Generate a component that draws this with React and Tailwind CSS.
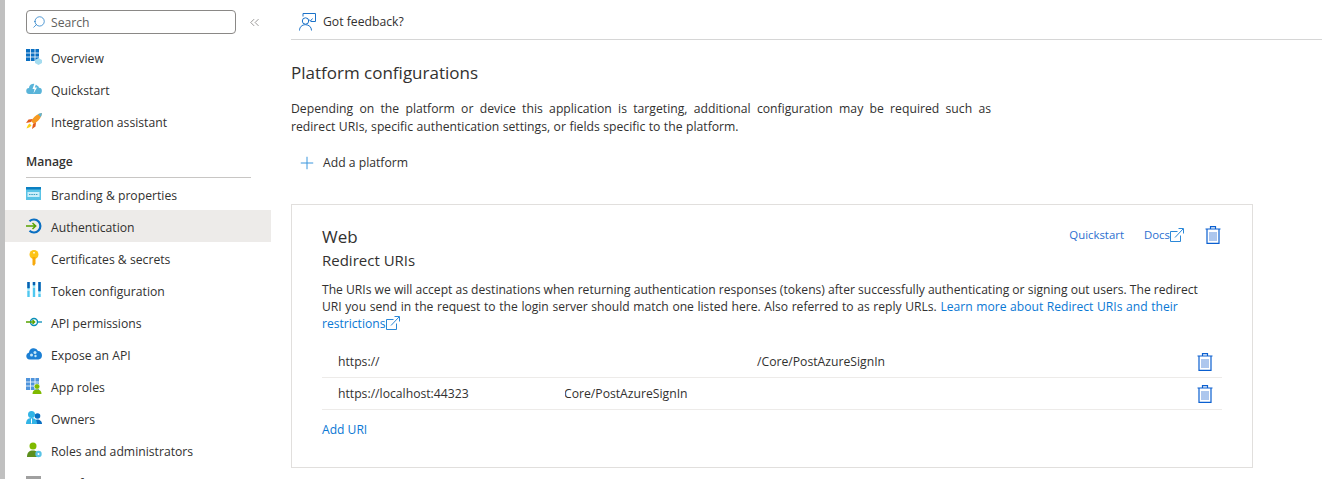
import { Search, ChevronsLeft, Plus } from "lucide-react";

const IconOverview = () => (
  <svg width="16" height="16" viewBox="0 0 16 16">
    <rect x="0" y="0" width="13" height="12" fill="#0a6fc2" />
    <path d="M4.500 0v12M9 0v12M0 4h13M0 8h13" stroke="#fff" strokeWidth=".8" />
    <path d="M9 11l3.500-2 3.500 2v3l-3.500 2L9 14z" fill="#a5dcef" />
  </svg>
);
const IconQuickstart = () => (
  <svg width="16" height="16" viewBox="0 0 16 16">
    <path d="M3.500 13a3 3 0 0 1-.5-6A4.500 4.500 0 0 1 11 4.500a3 3 0 0 1 2 2.300 3.100 3.100 0 0 1-.5 6.200z" fill="#59b4d9" />
    <path d="M8.500 2.500L6.500 8h2l-1 4.500 3.500-6H8.800l1.400-4z" fill="#fff" />
  </svg>
);
const IconRocket = () => (
  <svg width="16" height="16" viewBox="0 0 16 16">
    <path d="M16 0c-4 .5-7 2.500-9.500 6L5 8l3 3 2-1.500C13.500 7 15.500 4 16 0z" fill="#f59a23" />
    <path d="M16 0c-1.500.2-3 .7-4 1.300l2.700 2.700C15.300 3 15.800 1.500 16 0z" fill="#59b4d9" />
    <path d="M6.500 6L2.500 6.500 0 10l5-1zM10 9.500L9.500 13.500 6 16l1-5z" fill="#e25b1e" />
    <path d="M3.500 10.500C2 11.500 1 14 .500 15.500 2 15 4.500 14 5.500 12.500z" fill="#fcd116" />
  </svg>
);
const IconBranding = () => (
  <svg width="16" height="14" viewBox="0 0 16 14">
    <rect width="15" height="13" fill="#59c3e6" />
    <rect width="15" height="2.500" fill="#0a7fc2" />
    <rect x="1.500" y="5" width="12" height="5" fill="#c9eef9" />
    <path d="M3 7.500h9" stroke="#3a9fc4" strokeWidth="1.200" strokeDasharray="1.500 .8" />
  </svg>
);
const IconAuth = () => (
  <svg width="16" height="16" viewBox="0 0 16 16">
    <path d="M3.500 3.200A6.500 6.500 0 1 1 3.500 12.800" fill="none" stroke="#0a6fc2" strokeWidth="2.200" />
    <path d="M0 8h9.500M6.500 5l3.200 3-3.200 3" fill="none" stroke="#57a300" strokeWidth="1.500" />
  </svg>
);
const IconKey = () => (
  <svg width="16" height="16" viewBox="0 0 16 16">
    <circle cx="8" cy="4.500" r="4.500" fill="#fcc419" />
    <path d="M6.500 7h3v6.500L8 16l-1.500-1.500z" fill="#f7a90c" />
    <rect x="7" y="2" width="2" height="1.500" fill="#fff3c4" />
  </svg>
);
const IconToken = () => (
  <svg width="16" height="16" viewBox="0 0 16 16">
    <path d="M2.500 0v15M8 0v15M13.500 0v15" stroke="#50c8f0" strokeWidth="2.400" />
    <path d="M2.500 0v6M8 0v3M13.500 0v9" stroke="#0a5fb0" strokeWidth="2.400" />
    <path d="M1 8h3M6.500 5h3M12 11h3" stroke="#fff" strokeWidth="1" />
  </svg>
);
const IconApi = () => (
  <svg width="16" height="16" viewBox="0 0 16 16">
    <circle cx="8" cy="8" r="3.500" fill="none" stroke="#0a8fb8" strokeWidth="1.400" />
    <path d="M0 8h9M6.500 6l2.200 2-2.200 2" fill="none" stroke="#57a300" strokeWidth="1.300" />
    <path d="M11.500 8H16" stroke="#0a8fb8" strokeWidth="1.300" />
  </svg>
);
const IconExpose = () => (
  <svg width="16" height="16" viewBox="0 0 16 16">
    <path d="M3.500 13.500a3.500 3.500 0 0 1-.5-6.900A4.700 4.700 0 0 1 12 5a4.300 4.300 0 0 1 .5 8.500z" fill="#1b7fd4" />
    <circle cx="5.500" cy="9" r="1.500" fill="#c4e6f7" />
    <circle cx="9" cy="6.500" r="1.500" fill="#c4e6f7" />
    <circle cx="9.500" cy="10" r="1.200" fill="#c4e6f7" />
  </svg>
);
const IconAppRoles = () => (
  <svg width="16" height="16" viewBox="0 0 16 16">
    <rect width="13" height="12" fill="#4f94dc" />
    <path d="M4.500 0v12M9 0v12M0 4h13M0 8h13" stroke="#fff" strokeWidth=".8" />
    <circle cx="11" cy="8.500" r="2.800" fill="#7fba00" stroke="#fff" strokeWidth=".6" />
    <path d="M6.500 16c0-3 1.500-4.500 4.500-4.500s4.500 1.500 4.500 4.500z" fill="#7fba00" />
  </svg>
);
const IconOwners = () => (
  <svg width="16" height="16" viewBox="0 0 16 16">
    <circle cx="11.500" cy="6" r="2.800" fill="#0a6fc2" />
    <path d="M8 14c0-3 1.500-4.500 3.500-4.500S16 11 16 14z" fill="#0a6fc2" />
    <circle cx="5.500" cy="4.500" r="3.500" fill="#32b4e6" />
    <path d="M0 14c0-4 2-6 5.500-6S11 10 11 14z" fill="#32b4e6" />
    <path d="M5.500 8.500v5" stroke="#fff" strokeWidth="1" />
  </svg>
);
const IconRoles = () => (
  <svg width="16" height="16" viewBox="0 0 16 16">
    <circle cx="7" cy="4" r="3.500" fill="#7fba00" />
    <path d="M1 15c0-5 2.500-6.500 6-6.500 2 0 3 .5 4 1.500v5z" fill="#5c8f1e" />
    <circle cx="12.500" cy="12" r="3.200" fill="#59c3e6" />
    <circle cx="12.500" cy="12" r="1" fill="#fff" />
  </svg>
);
const IconManifest = () => (
  <svg width="16" height="16" viewBox="0 0 16 16">
    <rect y="2" width="15" height="14" fill="#a0a0a0" />
  </svg>
);
const IconFeedback = () => (
  <svg width="17" height="18" viewBox="0 0 17 18" fill="none" stroke="#1b72c9" strokeWidth="1">
    <circle cx="6.500" cy="8" r="3.200" />
    <path d="M.500 17.500c0-3.500 2.500-5.800 6-5.800s6 2.300 6 5.800" />
    <path d="M4 3.500V.500h12.500v8h-5" />
    <path d="M10 6.500l1.500 1.500 2-2.500" />
  </svg>
);
const IconExternal = () => (
  <svg width="14" height="14" viewBox="0 0 14 14" fill="none" stroke="#2b88d8" strokeWidth="1" className="shrink-0">
    <path d="M7.500 3.500h-7v10h10v-6" />
    <path d="M5 9.500L13 1M8.500.500h5v5" />
  </svg>
);
const IconTrash = () => (
  <svg width="16" height="18" viewBox="0 0 16 18" fill="none" stroke="#0a5fd0" strokeWidth="1.200">
    <path d="M.500 3h15M5.500 3V.700h5V3" />
    <path d="M2 3v14.400h12V3" />
    <path d="M5 6v9M7 6v9M9 6v9M11 6v9" stroke="#5c8fdc" strokeWidth="1" />
  </svg>
);

const topItems = [
  { icon: <IconOverview />, label: "Overview" },
  { icon: <IconQuickstart />, label: "Quickstart" },
  { icon: <IconRocket />, label: "Integration assistant" },
];

const manageItems = [
  { icon: <IconBranding />, label: "Branding & properties" },
  { icon: <IconAuth />, label: "Authentication", active: true },
  { icon: <IconKey />, label: "Certificates & secrets" },
  { icon: <IconToken />, label: "Token configuration" },
  { icon: <IconApi />, label: "API permissions" },
  { icon: <IconExpose />, label: "Expose an API" },
  { icon: <IconAppRoles />, label: "App roles" },
  { icon: <IconOwners />, label: "Owners" },
  { icon: <IconRoles />, label: "Roles and administrators" },
  { icon: <IconManifest />, label: "Manifest" },
];

function NavRow({ item }) {
  return (
    <div className={"flex items-center h-8 pl-[21px] " + (item.active ? "bg-[#edebe9]" : "")}>
      <span className="w-4 h-4 flex items-center justify-center shrink-0">{item.icon}</span>
      <span className="ml-[9px] pt-1 text-[12.2px] text-[#323130]">{item.label}</span>
    </div>
  );
}

function UriRow({ children }) {
  return (
    <div className="flex items-center h-8 pl-4 pr-[9px] text-[12.2px] text-[#323130] border-b border-[#edebe9]">
      <div className="flex pt-[2px]">{children}</div>
      <span className="ml-auto"><IconTrash /></span>
    </div>
  );
}

export default function App() {
  return (
    <div className="flex h-[479px] overflow-hidden bg-white font-['Open_Sans','Noto_Sans',sans-serif]">
      <div className="w-[5px] shrink-0 bg-[#c0c0c0]" />

      {/* sidebar */}
      <aside className="w-[266px] shrink-0">
        <div className="flex items-center pl-[21px] pt-[10px]">
          <div className="w-[210px] h-[24px] flex items-center border border-[#8a8886] rounded-sm pl-[5px] gap-[5px]">
            <Search size={14} strokeWidth={1.2} className="text-[#0a6fc2] -scale-x-100" />
            <span className="pt-[2px] text-[12.2px] text-[#605e5c]">Search</span>
          </div>
          <ChevronsLeft size={15} strokeWidth={1.2} className="ml-[11px] text-[#797775]" />
        </div>
        <div className="mt-[7px]">
          {topItems.map((item) => <NavRow key={item.label} item={item} />)}
        </div>
        <div className="ml-[21px] mr-5 mt-[13px] h-[28px] border-b border-[#c8c6c4] text-[12.2px] font-semibold text-[#323130] leading-[24px]">
          Manage
        </div>
        <div>
          {manageItems.map((item) => <NavRow key={item.label} item={item} />)}
        </div>
      </aside>

      {/* main */}
      <main className="flex-1 min-w-0 pl-5">
        <div className="h-[40px] border-b border-[#d6d6d6] flex items-center pl-2 pt-1">
          <IconFeedback />
          <span className="ml-[7px] pt-[2px] text-[12.2px] text-[#323130]">Got feedback?</span>
        </div>

        <h1 className="mt-[20px] text-[17px] leading-[26px] text-[#323130]">Platform configurations</h1>

        <div className="mt-[14px] w-[700px] text-[12.2px] leading-[18px] text-[#323130]">
          <p className="[text-align-last:justify]">
            Depending on the platform or device this application is targeting, additional configuration may be required such as
          </p>
          <p className="[word-spacing:0.3px]">redirect URIs, specific authentication settings, or fields specific to the platform.</p>
        </div>

        <div className="mt-[17px] h-5 flex items-center pl-[6px] text-[12.2px] text-[#323130]">
          <Plus size={20} strokeWidth={1.2} className="text-[#3a96dd]" />
          <span className="ml-[6px]">Add a platform</span>
        </div>

        <section className="mt-[31px] w-[962px] h-[264px] border border-[#e1dfdd] pl-[30px] pr-[30px] pt-[20px]">
          <div className="flex items-start">
            <div>
              <div className="text-[17px] leading-[24px] text-[#323130]">Web</div>
              <div className="text-[15px] leading-[22px] text-[#323130]">Redirect URIs</div>
            </div>
            <div className="ml-auto flex items-center h-5 text-[11.4px] text-[#2b6fd0]">
              <span>Quickstart</span>
              <span className="ml-[20px]">Docs</span>
              <IconExternal />
              <span className="ml-[21px] mr-[1px]"><IconTrash /></span>
            </div>
          </div>

          <p className="mt-[10px] text-[12.1px] leading-[17px] text-[#323130]">
            The URIs we will accept as destinations when returning authentication responses (tokens) after successfully authenticating or signing out users. The redirect
            <br />
            <span className="[word-spacing:0.5px]">
              URI you send in the request to the login server should match one listed here. Also referred to as reply URLs.{" "}
              <span className="text-[#0a78d4]">Learn more about Redirect URIs and their</span>
            </span>
            <br />
            <span className="text-[#0a78d4]">
              restrictions
              <span className="inline-block align-[-2px] ml-[1px]"><IconExternal /></span>
            </span>
          </p>

          <div className="mt-[14px]">
            <UriRow>
              <span className="w-[419px] shrink-0">
                <span className="block w-[43px] overflow-hidden whitespace-nowrap">https://</span>
              </span>
              <span>/Core/PostAzureSignIn</span>
            </UriRow>
            <UriRow>
              <span className="w-[227px] shrink-0">https://localhost:44323</span>
              <span className="block overflow-hidden">
                <span className="block -ml-[1px]">Core/PostAzureSignIn</span>
              </span>
            </UriRow>
          </div>

          <div className="mt-[11px] text-[12.1px] text-[#0a78d4]">Add URI</div>
        </section>
      </main>
    </div>
  );
}
